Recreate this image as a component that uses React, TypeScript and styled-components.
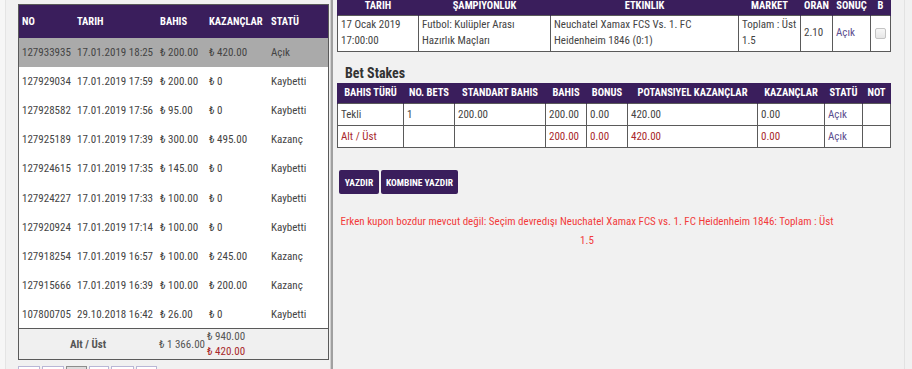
import React from "react";
import styled, { createGlobalStyle } from "styled-components";

const FONT = `"Liberation Sans Narrow", "Roboto Condensed", "Arial Narrow", Roboto, sans-serif`;
const PURPLE = "#3a1e5c";
const LINE = "#5a5a5a";

const Global = createGlobalStyle`
  html, body { margin: 0; padding: 0; background: #f1f1f1; }
  body { font-family: ${FONT}; color: #444; }
  * { box-sizing: border-box; }
`;

const Page = styled.div`
  display: flex;
  height: 369px;
  overflow: hidden;
  background: #f1f1f1;
`;

const LeftStrip = styled.div`
  width: 6px;
  flex: none;
  background: #f6f6f6;
  border-right: 1px solid #e4e4e4;
`;

const LeftColumn = styled.div`
  flex: none;
  width: 323px;
  padding: 4px 0 0 12px;
`;

const ListPanel = styled.div`
  width: 311px;
  border: 1px solid ${LINE};
  background: #fff;
`;

const Table = styled.table`
  width: 100%;
  border-collapse: collapse;
  table-layout: fixed;
  font-family: ${FONT};
`;

const ListHeadCell = styled.th`
  height: 33px;
  background: ${PURPLE};
  color: #fff;
  font-size: 10.5px;
  font-weight: 700;
  text-align: left;
  padding: 0 3px;
  white-space: nowrap;
`;

const ListRow = styled.tr<{ $active?: boolean }>`
  height: 29.1px;
  background: ${(p) => (p.$active ? "#aaaaaa" : "#fff")};
`;

const ListCell = styled.td`
  font-size: 11px;
  color: #444;
  padding: 0 3px;
  white-space: nowrap;
`;

const FootRow = styled.tr`
  height: 30px;
  background: #f0f0f0;
  border-top: 1px solid ${LINE};
`;

const FootCell = styled.td<{ $align?: string; $bold?: boolean }>`
  font-size: 11px;
  color: #555;
  font-weight: ${(p) => (p.$bold ? 700 : 400)};
  text-align: ${(p) => p.$align || "left"};
  padding: 0 1px;
  white-space: nowrap;
  line-height: 15px;
`;

const Red = styled.div`
  color: #a8282b;
`;

const Pager = styled.div`
  display: flex;
  gap: 2px;
  margin-top: 6px;
`;

const PageBox = styled.div<{ $w: number; $active?: boolean }>`
  width: ${(p) => p.$w}px;
  height: 22px;
  border: 1px solid ${(p) => (p.$active ? "#8d8d8d" : "#b9b7d6")};
  background: ${(p) => (p.$active ? "#dcdcdc" : "#fff")};
`;

const Divider = styled.div`
  flex: none;
  width: 3px;
  margin-left: 1px;
  background: #a0a0a0;
  border-left: 1px solid #d0d0d0;
`;

const DetailPanel = styled.div`
  flex: none;
  width: 571px;
  padding-left: 4px;
`;

const RightEdge = styled.div`
  flex: none;
  width: 1px;
  background: #e2e2e2;
`;

const DataTable = styled(Table)`
  width: 553px;
  background: #fff;
`;

const HeadCell = styled.th<{ $h: number; $top?: boolean }>`
  height: ${(p) => p.$h}px;
  background: ${PURPLE};
  color: #fff;
  font-size: 10.5px;
  font-weight: 700;
  text-align: center;
  vertical-align: ${(p) => (p.$top ? "top" : "middle")};
  line-height: ${(p) => (p.$top ? "12px" : "normal")};
  padding: 0 2px;
  white-space: nowrap;
  border-left: 1px solid ${PURPLE};
  border-right: 1px solid ${PURPLE};
`;

const Cell = styled.td<{ $tone?: "red" | "link" }>`
  border: 1px solid ${LINE};
  font-size: 11px;
  line-height: 16px;
  padding: 1px 3px;
  vertical-align: middle;
  color: ${(p) => (p.$tone === "red" ? "#a8282b" : p.$tone === "link" ? "#5d4e8e" : "#444")};
`;

const EventRow = styled.tr`
  height: 36px;
`;

const StakeRow = styled.tr`
  height: 22px;
`;

const Check = styled.div`
  width: 11px;
  height: 11px;
  margin: 0 auto;
  border: 1px solid #c4c4c4;
  border-radius: 2px;
  background: linear-gradient(#f7f7f7, #e6e6e6);
`;

const SectionTitle = styled.h3`
  margin: 12px 0 1px 8px;
  font-size: 14px;
  line-height: 18px;
  font-weight: 700;
  color: #333;
`;

const ButtonRow = styled.div`
  display: flex;
  gap: 2px;
  margin: 22px 0 0 2px;
`;

const Button = styled.button<{ $w: number }>`
  width: ${(p) => p.$w}px;
  height: 24px;
  padding: 0;
  border: none;
  border-radius: 2px;
  background: ${PURPLE};
  color: #fff;
  font-family: ${FONT};
  font-size: 9.5px;
  font-weight: 700;
  white-space: nowrap;
`;

const ErrorText = styled.div`
  width: 500px;
  margin-top: 18px;
  font-size: 11px;
  line-height: 19px;
  color: #f23b3b;
  text-align: center;
`;

const coupons = [
  ["127933935", "17.01.2019 18:25", "₺ 200.00", "₺ 420.00", "Açık"],
  ["127929034", "17.01.2019 17:59", "₺ 200.00", "₺ 0", "Kaybetti"],
  ["127928582", "17.01.2019 17:56", "₺ 95.00", "₺ 0", "Kaybetti"],
  ["127925189", "17.01.2019 17:39", "₺ 300.00", "₺ 495.00", "Kazanç"],
  ["127924615", "17.01.2019 17:35", "₺ 145.00", "₺ 0", "Kaybetti"],
  ["127924227", "17.01.2019 17:33", "₺ 100.00", "₺ 0", "Kaybetti"],
  ["127920924", "17.01.2019 17:14", "₺ 100.00", "₺ 0", "Kaybetti"],
  ["127918254", "17.01.2019 16:57", "₺ 100.00", "₺ 245.00", "Kazanç"],
  ["127915666", "17.01.2019 16:39", "₺ 100.00", "₺ 200.00", "Kazanç"],
  ["107800705", "29.10.2018 16:42", "₺ 26.00", "₺ 0", "Kaybetti"],
];

const eventCols = [81, 132, 188, 62, 32, 38, 20];
const eventHeads = ["TARIH", "ŞAMPIYONLUK", "ETKINLIK", "MARKET", "ORAN", "SONUÇ", "B"];
const stakeCols = [66, 51, 91, 41, 41, 130, 67, 38, 28];
const stakeHeads = ["BAHIS TÜRÜ", "NO. BETS", "STANDART BAHIS", "BAHIS", "BONUS", "POTANSIYEL KAZANÇLAR", "KAZANÇLAR", "STATÜ", "NOT"];

export default function App() {
  return (
    <Page>
      <Global />
      <LeftStrip />
      <LeftColumn>
        <ListPanel>
          <Table>
            <colgroup>
              {[55, 83, 49, 62, 60].map((w, i) => (
                <col key={i} style={{ width: w }} />
              ))}
            </colgroup>
            <thead>
              <tr>
                {["NO", "TARIH", "BAHIS", "KAZANÇLAR", "STATÜ"].map((h) => (
                  <ListHeadCell key={h}>{h}</ListHeadCell>
                ))}
              </tr>
            </thead>
            <tbody>
              {coupons.map((c, i) => (
                <ListRow key={c[0]} $active={i === 0}>
                  {c.map((v, j) => (
                    <ListCell key={j}>{v}</ListCell>
                  ))}
                </ListRow>
              ))}
              <FootRow>
                <FootCell colSpan={2} $align="center" $bold>
                  Alt / Üst
                </FootCell>
                <FootCell $align="right">₺ 1 366.00</FootCell>
                <FootCell>
                  <div>₺ 940.00</div>
                  <Red>₺ 420.00</Red>
                </FootCell>
                <FootCell />
              </FootRow>
            </tbody>
          </Table>
        </ListPanel>
        <Pager>
          <PageBox $w={22} />
          <PageBox $w={22} />
          <PageBox $w={21} $active />
          <PageBox $w={20} />
          <PageBox $w={23} />
          <PageBox $w={21} />
        </Pager>
      </LeftColumn>
      <Divider />
      <DetailPanel>
        <DataTable>
          <colgroup>
            {eventCols.map((w, i) => (
              <col key={i} style={{ width: w }} />
            ))}
          </colgroup>
          <thead>
            <tr>
              {eventHeads.map((h) => (
                <HeadCell key={h} $h={15} $top>
                  {h}
                </HeadCell>
              ))}
            </tr>
          </thead>
          <tbody>
            <EventRow>
              <Cell>17 Ocak 2019<br />17:00:00</Cell>
              <Cell>Futbol: Kulüpler Arası<br />Hazırlık Maçları</Cell>
              <Cell>Neuchatel Xamax FCS Vs. 1. FC<br />Heidenheim 1846 (0:1)</Cell>
              <Cell>Toplam : Üst<br />1.5</Cell>
              <Cell>2.10</Cell>
              <Cell $tone="link">Açık</Cell>
              <Cell><Check /></Cell>
            </EventRow>
          </tbody>
        </DataTable>

        <SectionTitle>Bet Stakes</SectionTitle>

        <DataTable>
          <colgroup>
            {stakeCols.map((w, i) => (
              <col key={i} style={{ width: w }} />
            ))}
          </colgroup>
          <thead>
            <tr>
              {stakeHeads.map((h) => (
                <HeadCell key={h} $h={21}>
                  {h}
                </HeadCell>
              ))}
            </tr>
          </thead>
          <tbody>
            <StakeRow>
              <Cell>Tekli</Cell>
              <Cell>1</Cell>
              <Cell>200.00</Cell>
              <Cell>200.00</Cell>
              <Cell>0.00</Cell>
              <Cell>420.00</Cell>
              <Cell>0.00</Cell>
              <Cell $tone="link">Açık</Cell>
              <Cell />
            </StakeRow>
            <StakeRow>
              <Cell $tone="red">Alt / Üst</Cell>
              <Cell />
              <Cell />
              <Cell $tone="red">200.00</Cell>
              <Cell $tone="red">0.00</Cell>
              <Cell $tone="red">420.00</Cell>
              <Cell $tone="red">0.00</Cell>
              <Cell $tone="link">Açık</Cell>
              <Cell />
            </StakeRow>
          </tbody>
        </DataTable>

        <ButtonRow>
          <Button $w={40}>YAZDIR</Button>
          <Button $w={77}>KOMBINE YAZDIR</Button>
        </ButtonRow>

        <ErrorText>
          Erken kupon bozdur mevcut değil: Seçim devredışı Neuchatel Xamax FCS vs. 1. FC Heidenheim 1846: Toplam : Üst 1.5
        </ErrorText>
      </DetailPanel>
      <RightEdge />
    </Page>
  );
}
